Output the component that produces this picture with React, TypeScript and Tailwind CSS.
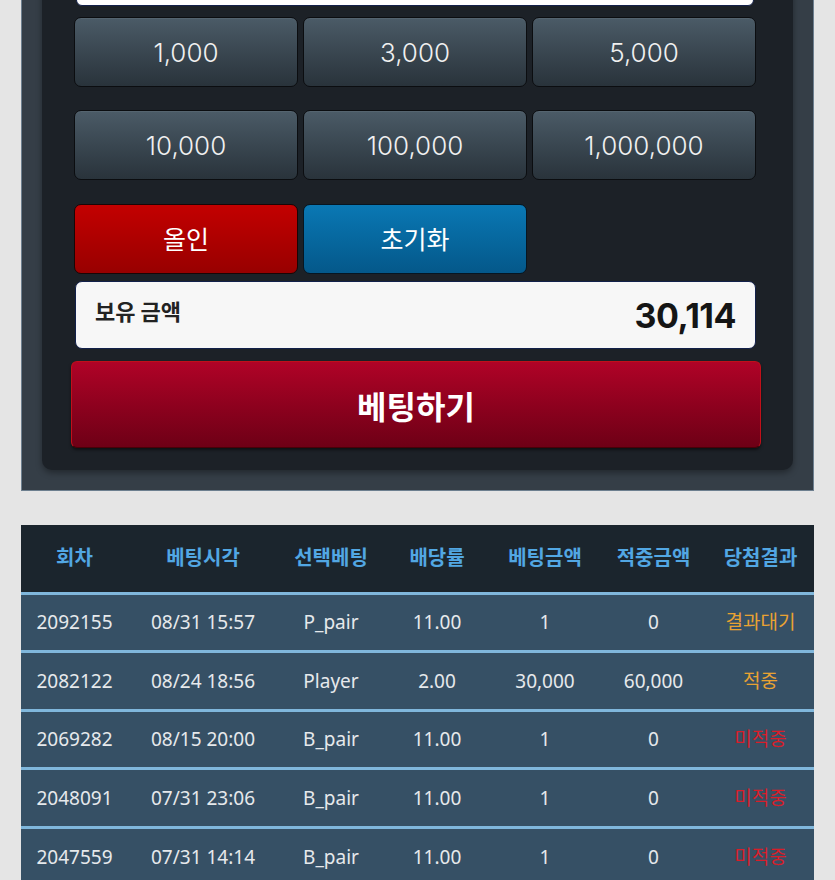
import React from 'react';

const chips = ['1,000', '3,000', '5,000', '10,000', '100,000', '1,000,000'];

interface BetRow {
  round: string;
  time: string;
  pick: string;
  odds: string;
  amount: string;
  win: string;
  result: string;
}

const rows: BetRow[] = [
  { round: '2092155', time: '08/31 15:57', pick: 'P_pair', odds: '11.00', amount: '1', win: '0', result: '결과대기' },
  { round: '2082122', time: '08/24 18:56', pick: 'Player', odds: '2.00', amount: '30,000', win: '60,000', result: '적중' },
  { round: '2069282', time: '08/15 20:00', pick: 'B_pair', odds: '11.00', amount: '1', win: '0', result: '미적중' },
  { round: '2048091', time: '07/31 23:06', pick: 'B_pair', odds: '11.00', amount: '1', win: '0', result: '미적중' },
  { round: '2047559', time: '07/31 14:14', pick: 'B_pair', odds: '11.00', amount: '1', win: '0', result: '미적중' },
];

const headers = ['회차', '베팅시각', '선택베팅', '배당률', '베팅금액', '적중금액', '당첨결과'];
const colWidths = ['w-[107px]', 'w-[150px]', 'w-[106px]', 'w-[106px]', 'w-[110px]', 'w-[107px]', 'w-[107px]'];

const resultColor = (r: string) => (r === '미적중' ? 'text-[#d81e2a]' : 'text-[#e9a232]');

const ChipButton: React.FC<{ label: string }> = ({ label }) => (
  <button className="h-[70px] rounded-[7px] border border-[#0b0d10] bg-gradient-to-b from-[#4b5b67] to-[#29333b] text-[26px] font-light text-[#f0f0f0] shadow-[inset_0_1px_0_rgba(255,255,255,0.06)]">
    {label}
  </button>
);

export default function App() {
  return (
    <div className="min-h-[880px] overflow-hidden bg-[#e5e5e5] font-['Inter','Noto_Sans_CJK_KR',sans-serif]">
      <div className="mx-[21px] -mt-[60px] border-x border-b border-[#6d7f8f] bg-[#353e47] px-[20px] pb-[20px]">
        <div className="rounded-b-[10px] bg-[#1c2127] px-[32px] pb-[22px] pr-[37px] pt-[20px] shadow-[0_3px_6px_rgba(0,0,0,0.35)]">
          <div className="mx-[2px] h-[46px] rounded-[6px] border border-[#13204a] bg-white" />
          <div className="mt-[11px] grid grid-cols-3 gap-x-[5px] gap-y-[23px]">
            {chips.map((c) => (
              <ChipButton key={c} label={c} />
            ))}
            <button className="mt-px h-[70px] rounded-[7px] border border-[#1a0505] bg-gradient-to-b from-[#c30000] to-[#980000] font-['Noto_Sans_CJK_KR',sans-serif] text-[25px] text-white">
              올인
            </button>
            <button className="mt-px h-[70px] rounded-[7px] border border-[#061622] bg-gradient-to-b from-[#0a78b4] to-[#04588a] font-['Noto_Sans_CJK_KR',sans-serif] text-[25px] text-white">
              초기화
            </button>
          </div>
          <div className="ml-px mt-[7px] flex h-[68px] items-center justify-between rounded-[7px] border border-[#12204a] bg-[#f7f7f7] pl-[19px] pr-[19px]">
            <span className="-mt-[10px] font-['Noto_Sans_CJK_KR',sans-serif] text-[22px] font-bold text-[#222]">보유 금액</span>
            <span className="text-[34px] font-bold tracking-[-0.5px] text-[#151515]">30,114</span>
          </div>
          <button className="-mx-[3px] mt-[12px] flex h-[87px] w-[calc(100%+8px)] items-center justify-center rounded-[6px] border border-[#c0101a] border-b-[#4a0008] bg-gradient-to-b from-[#b00327] to-[#6e0016] font-['Noto_Sans_CJK_KR',sans-serif] text-[32px] font-bold text-white shadow-[0_2px_3px_rgba(0,0,0,0.5)]">
            베팅하기
          </button>
        </div>
      </div>

      <div className="mx-[21px] mt-[34px] font-['Noto_Sans','Noto_Sans_CJK_KR',sans-serif]">
        <table className="w-full table-fixed border-collapse">
          <thead>
            <tr className="h-[68px] bg-[#1b252d]">
              {headers.map((h, i) => (
                <th key={h} className={`${colWidths[i]} text-center text-[20px] font-bold text-[#52a7e3]`}>
                  {h}
                </th>
              ))}
            </tr>
          </thead>
          <tbody>
            {rows.map((r) => (
              <tr key={r.round} className="h-[58.5px] border-t-[3px] border-[#80b7dc] bg-[#365065] text-center text-[19px] text-[#e6e9ec]">
                <td>{r.round}</td>
                <td>{r.time}</td>
                <td>{r.pick}</td>
                <td>{r.odds}</td>
                <td>{r.amount}</td>
                <td>{r.win}</td>
                <td className={resultColor(r.result)}>{r.result}</td>
              </tr>
            ))}
          </tbody>
        </table>
      </div>
    </div>
  );
}
